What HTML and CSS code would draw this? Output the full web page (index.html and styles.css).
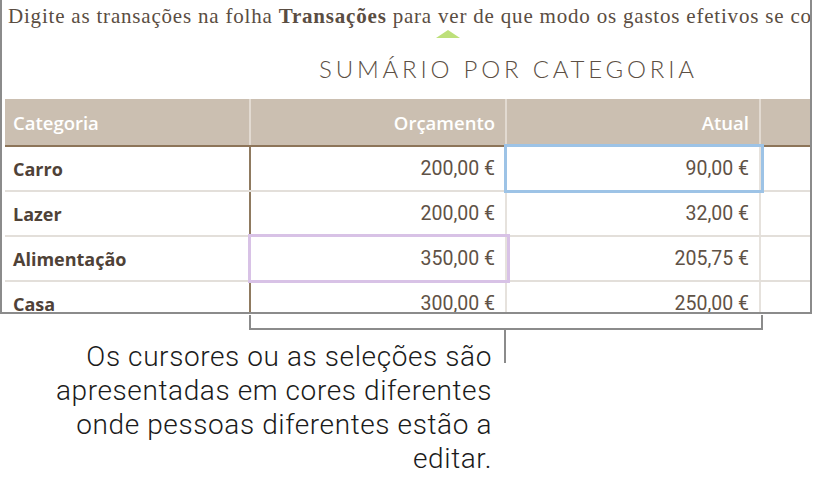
FILE: index.html
```html
<!DOCTYPE html>
<html lang="pt">
<head>
<meta charset="utf-8">
<title>Sumário por categoria</title>
<link rel="stylesheet" href="styles.css">
</head>
<body>
<div class="frame">
  <p class="intro">Digite as transações na folha <b>Transações</b> para ver de que modo os gastos efetivos se comparam com o orçamento.</p>
  <div class="caret"></div>
  <h1 class="title">SUMÁRIO POR CATEGORIA</h1>
  <div class="sheet">
    <div class="row head">
      <div class="cell">Categoria</div>
      <div class="cell num">Orçamento</div>
      <div class="cell num">Atual</div>
      <div class="cell"></div>
    </div>
    <div class="row">
      <div class="cell label">Carro</div>
      <div class="cell num">200,00 €</div>
      <div class="cell num sel-blue">90,00 €</div>
      <div class="cell"></div>
    </div>
    <div class="row">
      <div class="cell label">Lazer</div>
      <div class="cell num">200,00 €</div>
      <div class="cell num">32,00 €</div>
      <div class="cell"></div>
    </div>
    <div class="row">
      <div class="cell label">Alimentação</div>
      <div class="cell num sel-purple">350,00 €</div>
      <div class="cell num">205,75 €</div>
      <div class="cell"></div>
    </div>
    <div class="row">
      <div class="cell label">Casa</div>
      <div class="cell num">300,00 €</div>
      <div class="cell num">250,00 €</div>
      <div class="cell"></div>
    </div>
  </div>
</div>
<div class="bracket"></div>
<div class="note">
  <p class="caption">Os cursores ou as seleções são<br>apresentadas em cores diferentes<br>onde pessoas diferentes estão a<br>editar.</p>
  <div class="stem"></div>
</div>
</body>
</html>
```
FILE: styles.css
```css
* { box-sizing: border-box; }
html, body { margin: 0; padding: 0; background: #fff; }
body { width: 814px; height: 483px; overflow: hidden; }

.frame {
  width: 812px;
  height: 314px;
  border: 2px solid #8b8b8b;
  border-top: none;
  overflow: hidden;
}

.intro {
  margin: 0;
  padding: 2px 0 0 6px;
  font-family: "Liberation Serif", serif;
  font-size: 21px;
  line-height: 28px;
  letter-spacing: 0.8px;
  color: #5a4d42;
  white-space: nowrap;
}
.intro b { font-weight: bold; }

.caret {
  width: 0;
  height: 0;
  margin-left: 434px;
  border-left: 12px solid transparent;
  border-right: 12px solid transparent;
  border-bottom: 8px solid #bde07a;
}

.title {
  margin: 17px 0 0 317px;
  font-family: Lato, sans-serif;
  font-weight: 300;
  font-size: 24px;
  line-height: 28px;
  letter-spacing: 3.8px;
  color: #5c4f44;
  white-space: nowrap;
}

.sheet {
  margin: 16px 0 0 3px;
  width: 830px;
}

.row {
  display: grid;
  grid-template-columns: 246px 256px 254px 74px;
  height: 45px;
  border-bottom: 2px solid #e3dfda;
}

.cell {
  display: flex;
  align-items: center;
  padding: 0 10px 0 8px;
  border-right: 2px solid #e6e2dd;
  font-family: Roboto, sans-serif;
  font-size: 19.5px;
  color: #5f5246;
  white-space: nowrap;
}
.row > .cell:first-child { border-right-color: #8f7a60; }
.num { justify-content: flex-end; }

.head {
  height: 48px;
  background: #cbbfb1;
  border-bottom: 2px solid #8d7559;
}
.head .cell,
.head > .cell:first-child {
  border-right-color: #e2dad1;
  font-family: "Open Sans", sans-serif;
  font-weight: 600;
  font-size: 18.5px;
  color: #fff;
}

.label {
  font-family: "Open Sans", sans-serif;
  font-weight: 700;
  font-size: 18px;
  color: #4f4237;
}

.sel-blue,
.sel-purple {
  position: relative;
  z-index: 1;
  outline-offset: 0;
}
.sel-blue { outline: 3px solid #9dc3e6; }
.sel-purple { outline: 3px solid #d8c2e6; }

.bracket {
  width: 514px;
  height: 15px;
  margin: 1px 0 0 249px;
  border: 2px solid #8b8b8b;
  border-top: none;
}

.note {
  display: flex;
  align-items: flex-start;
}
.caption {
  width: 492px;
  margin: 10px 0 0;
  text-align: right;
  font-family: Roboto, sans-serif;
  font-weight: 300;
  font-size: 28px;
  line-height: 34px;
  letter-spacing: 0.6px;
  color: #1b1b1b;
}
.stem {
  width: 2px;
  height: 33px;
  margin-left: 12px;
  background: #8b8b8b;
}
```
